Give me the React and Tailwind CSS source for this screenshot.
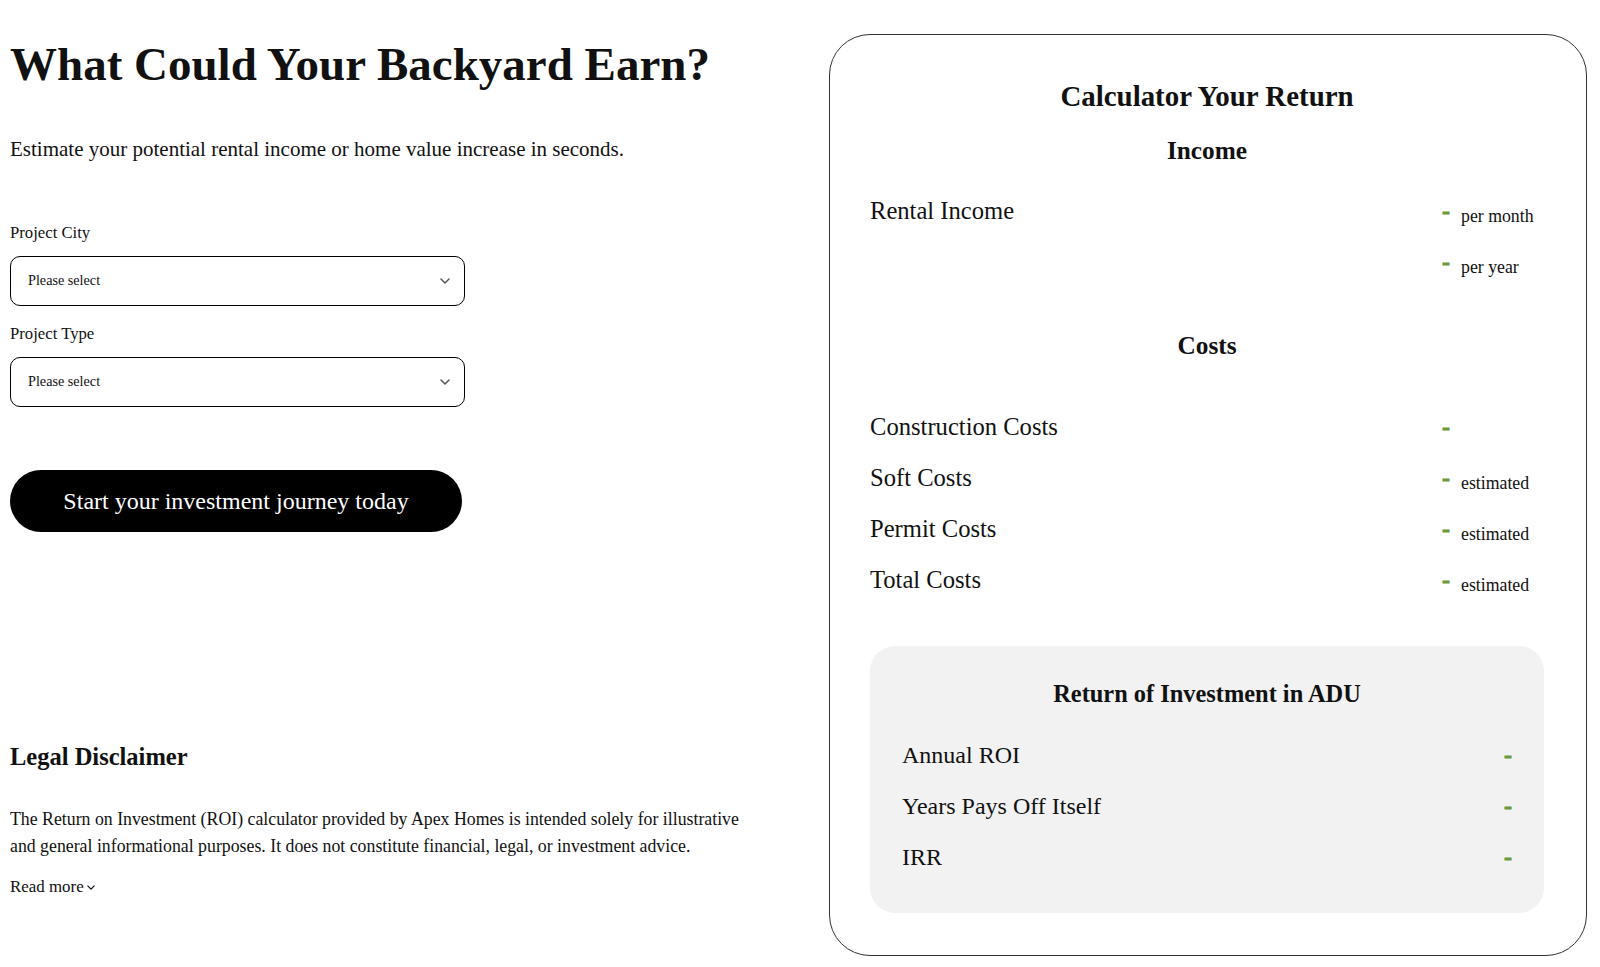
import React from 'react';

const serif = { fontFamily: '"Liberation Serif", "Times New Roman", serif' };

function Chevron({ className = '', w = 10, h = 6 }) {
  return (
    <svg className={className} width={w} height={h} viewBox="0 0 10 6" fill="none">
      <path d="M1 1l4 4 4-4" stroke="currentColor" strokeWidth="1.5" strokeLinecap="round" strokeLinejoin="round" />
    </svg>
  );
}

function SelectBox({ label, first }) {
  return (
    <div className={first ? 'mt-[59px]' : 'mt-[17px]'}>
      <div className="text-[16.7px] leading-[22px]">{label}</div>
      <div className="mt-[12px] flex h-[50px] w-[455px] items-center justify-between rounded-[10px] border border-black pl-[17px] pr-[14px]">
        <span className="text-[14.2px]">Please select</span>
        <Chevron className="text-[#555]" />
      </div>
    </div>
  );
}

function Dash() {
  return (
    <span className="text-[24px] font-bold leading-[26px] text-[#6a9a3a] [-webkit-text-stroke:0.8px_#6a9a3a]">-</span>
  );
}

function Row({ label, note, noDash }) {
  return (
    <div className="flex h-[51px] items-baseline justify-between">
      <span className="text-[24.6px] leading-[30px]">{label || '\u00a0'}</span>
      <span className="flex w-[102px] items-baseline gap-[11px]">
        {!noDash && <Dash />}
        {note && <span className="relative top-[3px] text-[17.8px] leading-[26px]">{note}</span>}
      </span>
    </div>
  );
}

function RoiRow({ label }) {
  return (
    <div className="flex h-[51px] items-baseline justify-between">
      <span className="text-[24px] leading-[30px]">{label}</span>
      <Dash />
    </div>
  );
}

export default function App() {
  return (
    <div className="flex bg-white pl-[10px] pt-[34px] pb-[10px] text-[#111]" style={serif}>
      <div className="w-[819px] shrink-0">
        <h1 className="mt-[2px] text-[47px] font-bold leading-[56px]">What Could Your Backyard Earn?</h1>
        <p className="mt-[43px] text-[21px] leading-[28px]">
          Estimate your potential rental income or home value increase in seconds.
        </p>
        <SelectBox label="Project City" first />
        <SelectBox label="Project Type" />
        <button className="mt-[63px] flex h-[62px] w-[452px] items-center justify-center rounded-full bg-black text-[24px] text-white">
          Start your investment journey today
        </button>
        <h2 className="mt-[209px] text-[24.5px] font-bold leading-[32px]">Legal Disclaimer</h2>
        <p className="mt-[33px] w-[748px] text-[17.8px] leading-[27px]">
          The Return on Investment (ROI) calculator provided by Apex Homes is intended solely for illustrative and general informational purposes. It does not constitute financial, legal, or investment advice.
        </p>
        <button className="mt-[16px] flex items-center gap-[3px] text-[16.9px] leading-[22px]">
          Read more
          <Chevron w={8} h={5} />
        </button>
      </div>

      <div className="flex h-[922px] w-[758px] shrink-0 flex-col rounded-[41px] border border-[#333] pl-[40px] pr-[42px] pt-[42px]">
        <h2 className="text-center text-[28.9px] font-bold leading-[38px]">Calculator Your Return</h2>
        <h3 className="mt-[19px] text-center text-[25.3px] font-bold leading-[32px]">Income</h3>

        <div className="mt-[30px]">
          <Row label="Rental Income" note="per month" />
          <Row note="per year" />
        </div>

        <h3 className="mt-[31px] text-center text-[25.3px] font-bold leading-[32px]">Costs</h3>

        <div className="mt-[51px]">
          <Row label="Construction Costs" />
          <Row label="Soft Costs" note="estimated" />
          <Row label="Permit Costs" note="estimated" />
          <Row label="Total Costs" note="estimated" />
        </div>

        <div className="mt-[30px] h-[267px] rounded-[25px] bg-[#f2f2f2] px-[32px] pt-[32px]">
          <h3 className="text-center text-[24.4px] font-bold leading-[32px]">Return of Investment in ADU</h3>
          <div className="mt-[30px]">
            <RoiRow label="Annual ROI" />
            <RoiRow label="Years Pays Off Itself" />
            <RoiRow label="IRR" />
          </div>
        </div>
      </div>
    </div>
  );
}
